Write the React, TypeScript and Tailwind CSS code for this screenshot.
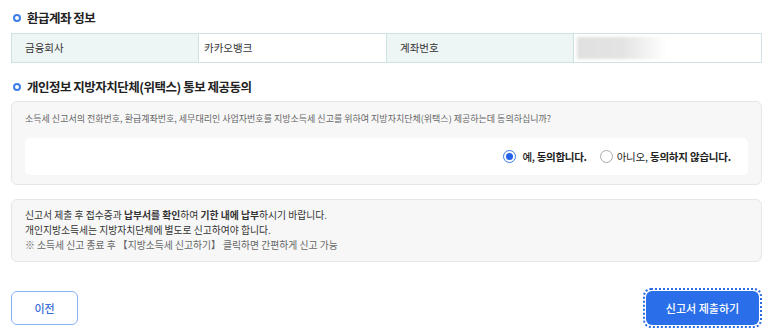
import React from "react";

const font = { fontFamily: '"Noto Sans CJK KR", "Noto Sans", sans-serif' };

function Bullet() {
  return (
    <span className="inline-block w-[8px] h-[8px] rounded-full border-[2px] border-[#3d7de8] mr-[6px] shrink-0" />
  );
}

export default function App() {
  return (
    <div style={font} className="w-[773px] h-[335px] bg-white px-[11px] pt-[8px] text-[#333]">
      <div className="flex items-center h-[20px] pl-[2px]">
        <Bullet />
        <span className="text-[12.5px] tracking-[-0.5px] font-bold text-[#222] leading-[20px]">환급계좌 정보</span>
      </div>
      <div className="mt-[5px] grid grid-cols-[187px_188px_187px_1fr] h-[30px] border border-[#cfe2e3] text-[10.5px] text-[#333]">
        <div className="bg-[#eef6f5] flex items-center pl-[13px] border-r border-[#cfe2e3]">금융회사</div>
        <div className="flex items-center pl-[5px] border-r border-[#cfe2e3]">카카오뱅크</div>
        <div className="bg-[#eef6f5] flex items-center pl-[13px] border-r border-[#cfe2e3]">계좌번호</div>
        <div className="flex items-center pl-[3px]">
          <div className="w-[90px] h-[22px] bg-gradient-to-r from-[#e0e0e0] via-[#e3e3e3] to-white blur-[1.5px]" />
        </div>
      </div>
      <div className="mt-[14px] flex items-center h-[20px] pl-[2px]">
        <Bullet />
        <span className="text-[12.5px] tracking-[-0.5px] font-bold text-[#222] leading-[20px]">개인정보 지방자치단체(위택스) 통보 제공동의</span>
      </div>
      <div className="mt-[4px] h-[84px] bg-[#f7f7f7] border border-[#e6e6e6] rounded-[6px] px-[13px] pt-[10px]">
        <div className="text-[9px] text-[#666] leading-[14px]">
          소득세 신고서의 전화번호, 환급계좌번호, 세무대리인 사업자번호를 지방소득세 신고를 위하여 지방자치단체(위택스) 제공하는데 동의하십니까?
        </div>
        <div className="mt-[12px] h-[37px] bg-white rounded-[5px] flex items-center justify-end pr-[17px] text-[10.5px] font-bold text-[#222]">
          <label className="flex items-center">
            <span className="w-[13px] h-[13px] rounded-full border border-[#3d7de8] flex items-center justify-center mr-[6px] bg-white">
              <span className="w-[7px] h-[7px] rounded-full bg-[#2563eb]" />
            </span>
            <span className="tracking-[-0.3px]"><span className="font-medium">예,</span> 동의합니다.</span>
          </label>
          <label className="flex items-center ml-[13px]">
            <span className="w-[13px] h-[13px] rounded-full border border-[#aaa] mr-[4px] bg-white" />
            <span className="tracking-[-0.2px]"><span className="font-normal">아니오,</span> 동의하지 않습니다.</span>
          </label>
        </div>
      </div>
      <div className="mt-[14px] h-[63px] bg-[#f7f7f7] border border-[#e6e6e6] rounded-[6px] px-[13px] pt-[8px] text-[9.8px] leading-[15px] text-[#333]">
        <div>
          신고서 제출 후 접수증과 <b>납부서를 확인</b>하여 <b>기한 내에 납부</b>하시기 바랍니다.
        </div>
        <div>개인지방소득세는 지방자치단체에 별도로 신고하여야 합니다.</div>
        <div className="text-[#666]">※ 소득세 신고 종료 후 【지방소득세 신고하기】 클릭하면 간편하게 신고 가능</div>
      </div>
      <div className="mt-[26px] flex justify-between items-center">
        <button className="w-[67px] h-[34px] border border-[#8db0f3] rounded-[6px] text-[#3b6fd8] text-[11px] font-medium bg-white">
          이전
        </button>
        <div className="p-[1px] rounded-[8px] border-[2px] border-dotted border-[#2b6be6]">
          <button className="w-[113px] h-[34px] rounded-[6px] bg-[#2a6fe9] text-white text-[11px] font-medium">
            신고서 제출하기
          </button>
        </div>
      </div>
    </div>
  );
}
